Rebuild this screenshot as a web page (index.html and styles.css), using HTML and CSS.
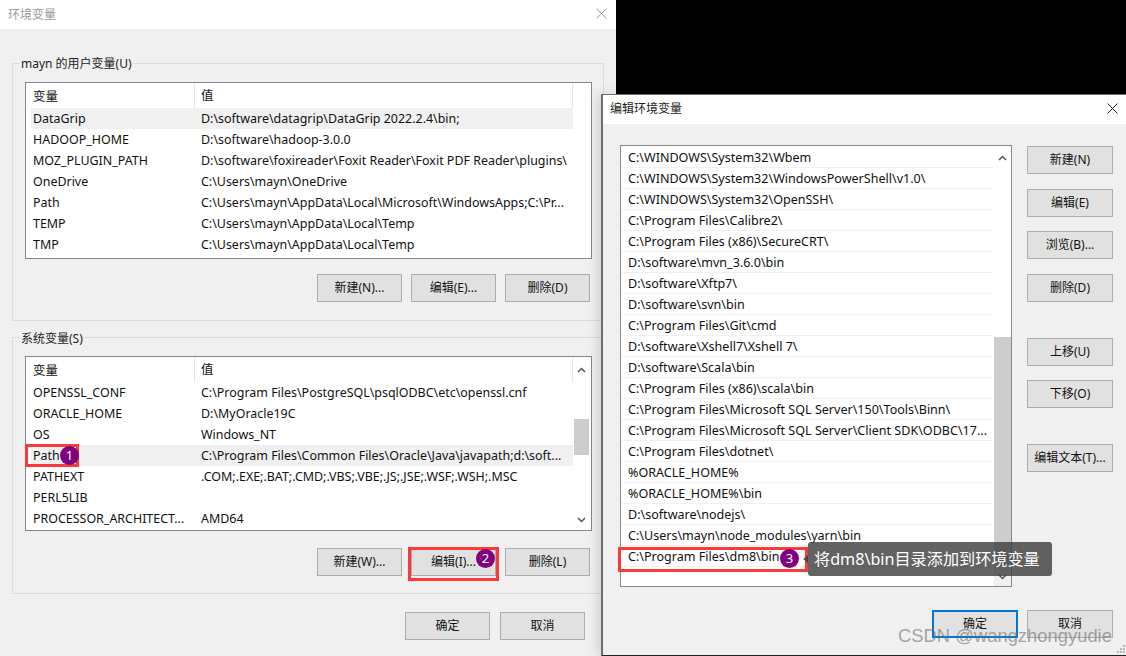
FILE: index.html
```html
<!DOCTYPE html>
<html lang="zh-CN">
<head>
<meta charset="utf-8">
<title>环境变量</title>
<link rel="stylesheet" href="styles.css">
</head>
<body>
<div class="desktop">
  <section class="window win-main">
    <header class="titlebar">
      <span class="title title-muted">环境变量</span>
      <svg class="close close-muted" viewBox="0 0 11 11"><path d="M0.5 0.5L10.5 10.5M10.5 0.5L0.5 10.5"/></svg>
    </header>
    <div class="main-body">
      <fieldset class="group group-user">
        <legend>mayn 的用户变量(U)</legend>
        <div class="list list-user">
          <div class="list-content">
            <div class="head"><span class="c1">变量</span><span class="c2">值</span></div>
            <div class="row selected"><span class="c1">DataGrip</span><span class="c2">D:\software\datagrip\DataGrip 2022.2.4\bin;</span></div>
            <div class="row"><span class="c1">HADOOP_HOME</span><span class="c2">D:\software\hadoop-3.0.0</span></div>
            <div class="row"><span class="c1">MOZ_PLUGIN_PATH</span><span class="c2">D:\software\foxireader\Foxit Reader\Foxit PDF Reader\plugins\</span></div>
            <div class="row"><span class="c1">OneDrive</span><span class="c2">C:\Users\mayn\OneDrive</span></div>
            <div class="row"><span class="c1">Path</span><span class="c2">C:\Users\mayn\AppData\Local\Microsoft\WindowsApps;C:\Pr...</span></div>
            <div class="row"><span class="c1">TEMP</span><span class="c2">C:\Users\mayn\AppData\Local\Temp</span></div>
            <div class="row"><span class="c1">TMP</span><span class="c2">C:\Users\mayn\AppData\Local\Temp</span></div>
          </div>
        </div>
        <div class="btn-row">
          <button class="btn">新建(N)...</button>
          <button class="btn">编辑(E)...</button>
          <button class="btn">删除(D)</button>
        </div>
      </fieldset>
      <fieldset class="group group-system">
        <legend>系统变量(S)</legend>
        <div class="list list-system">
          <div class="list-content">
            <div class="head"><span class="c1">变量</span><span class="c2">值</span></div>
            <div class="row"><span class="c1">OPENSSL_CONF</span><span class="c2">C:\Program Files\PostgreSQL\psqlODBC\etc\openssl.cnf</span></div>
            <div class="row"><span class="c1">ORACLE_HOME</span><span class="c2">D:\MyOracle19C</span></div>
            <div class="row"><span class="c1">OS</span><span class="c2">Windows_NT</span></div>
            <div class="row selected"><span class="c1">Path</span><span class="c2">C:\Program Files\Common Files\Oracle\Java\javapath;d:\soft...</span></div>
            <div class="row"><span class="c1">PATHEXT</span><span class="c2">.COM;.EXE;.BAT;.CMD;.VBS;.VBE;.JS;.JSE;.WSF;.WSH;.MSC</span></div>
            <div class="row"><span class="c1">PERL5LIB</span><span class="c2"></span></div>
            <div class="row"><span class="c1">PROCESSOR_ARCHITECT...</span><span class="c2">AMD64</span></div>
          </div>
          <div class="scrollbar scrollbar-system">
            <svg class="chev" viewBox="0 0 9 6"><path d="M1 5L4.5 1.5L8 5"/></svg>
            <div class="track"><div class="thumb thumb-system"></div></div>
            <svg class="chev" viewBox="0 0 9 6"><path d="M1 1L4.5 4.5L8 1"/></svg>
          </div>
        </div>
        <div class="btn-row">
          <button class="btn">新建(W)...</button>
          <button class="btn">编辑(I)...</button>
          <button class="btn">删除(L)</button>
        </div>
      </fieldset>
      <div class="btn-row dialog-actions">
        <button class="btn">确定</button>
        <button class="btn">取消</button>
      </div>
    </div>
  </section>

  <section class="window win-edit">
    <header class="titlebar">
      <span class="title">编辑环境变量</span>
      <svg class="close" viewBox="0 0 11 11"><path d="M0.5 0.5L10.5 10.5M10.5 0.5L0.5 10.5"/></svg>
    </header>
    <div class="edit-body">
      <div class="path-list">
        <div class="path-rows">
          <div class="path">C:\WINDOWS\System32\Wbem</div>
          <div class="path">C:\WINDOWS\System32\WindowsPowerShell\v1.0\</div>
          <div class="path">C:\WINDOWS\System32\OpenSSH\</div>
          <div class="path">C:\Program Files\Calibre2\</div>
          <div class="path">C:\Program Files (x86)\SecureCRT\</div>
          <div class="path">D:\software\mvn_3.6.0\bin</div>
          <div class="path">D:\software\Xftp7\</div>
          <div class="path">D:\software\svn\bin</div>
          <div class="path">C:\Program Files\Git\cmd</div>
          <div class="path">D:\software\Xshell7\Xshell 7\</div>
          <div class="path">D:\software\Scala\bin</div>
          <div class="path">C:\Program Files (x86)\scala\bin</div>
          <div class="path">C:\Program Files\Microsoft SQL Server\150\Tools\Binn\</div>
          <div class="path">C:\Program Files\Microsoft SQL Server\Client SDK\ODBC\17...</div>
          <div class="path">C:\Program Files\dotnet\</div>
          <div class="path">%ORACLE_HOME%</div>
          <div class="path">%ORACLE_HOME%\bin</div>
          <div class="path">D:\software\nodejs\</div>
          <div class="path">C:\Users\mayn\node_modules\yarn\bin</div>
          <div class="path">C:\Program Files\dm8\bin</div>
        </div>
        <div class="scrollbar scrollbar-edit">
          <svg class="chev" viewBox="0 0 9 6"><path d="M1 5L4.5 1.5L8 5"/></svg>
          <div class="track"><div class="thumb thumb-edit"></div></div>
          <svg class="chev" viewBox="0 0 9 6"><path d="M1 1L4.5 4.5L8 1"/></svg>
        </div>
      </div>
      <div class="side">
        <button class="btn wide">新建(N)</button>
        <button class="btn wide gap-15">编辑(E)</button>
        <button class="btn wide gap-14">浏览(B)...</button>
        <button class="btn wide gap-15">删除(D)</button>
        <button class="btn wide gap-36">上移(U)</button>
        <button class="btn wide gap-14">下移(O)</button>
        <button class="btn wide gap-36">编辑文本(T)...</button>
      </div>
    </div>
    <div class="btn-row edit-actions">
      <button class="btn wide primary">确定</button>
      <button class="btn wide">取消</button>
    </div>
    <svg class="grip" viewBox="0 0 9 9">
      <rect x="6" y="0" width="2" height="2"/>
      <rect x="3" y="3" width="2" height="2"/>
      <rect x="6" y="3" width="2" height="2"/>
      <rect x="0" y="6" width="2" height="2"/>
      <rect x="3" y="6" width="2" height="2"/>
      <rect x="6" y="6" width="2" height="2"/>
    </svg>
  </section>

  <div class="mark mark-path"></div>
  <div class="mark mark-edit"></div>
  <div class="mark mark-dm8"></div>
  <div class="badge badge-1">1</div>
  <div class="badge badge-2">2</div>
  <div class="badge badge-3">3</div>
  <div class="tip">将dm8\bin目录添加到环境变量</div>
  <div class="watermark">CSDN @wangzhongyudie</div>
</div>
</body>
</html>
```
FILE: styles.css
```css
* { box-sizing: border-box; }
html, body { margin: 0; padding: 0; }
body {
  width: 1126px;
  height: 656px;
  overflow: hidden;
  background: #000;
  font-family: "Noto Sans", "Noto Sans CJK SC", sans-serif;
  font-size: 12px;
  color: #111;
}
.desktop { position: relative; width: 1126px; height: 656px; overflow: hidden; }

.window { position: absolute; background: #f0f0f0; }
.win-main { left: 0; top: 0; width: 616px; height: 656px; }
.win-edit {
  left: 601px; top: 94px; width: 525px; height: 562px;
  border-left: 2px solid #6e6e6e;
  border-top: 1px solid #6e6e6e;
  border-bottom: 1px solid #222;
  box-shadow: -4px 0 10px rgba(0, 0, 0, .12);
}

.titlebar {
  display: flex;
  align-items: center;
  justify-content: space-between;
  background: #fff;
  height: 29px;
  padding: 0 9px 2px 8px;
}
.win-edit .titlebar { padding: 0 8px 3px 7px; }
.title { font-size: 12px; color: #222; }
.title-muted { color: #9a9a9a; }
.close { width: 11px; height: 11px; fill: none; stroke: #222; stroke-width: 1; }
.close-muted { stroke: #9a9a9a; }

.main-body { padding: 26px 12px 0 12px; }
.group {
  margin: 0;
  padding: 11px 11px 0 12px;
  border: 1px solid #dcdcdc;
  min-width: 0;
}
.group legend { margin-left: -5px; padding: 0 1px; height: 16px; line-height: 18px; font-size: 12px; color: #222; }
.group-user { height: 266px; }
.group-system { height: 265px; margin-top: 8px; padding-top: 11px; }
.group-system legend { line-height: 20px; }

.list { display: flex; background: #fff; border: 1px solid #828790; width: 567px; font-size: 12.45px; }
.list-user { height: 177px; }
.list-system { height: 175px; }
.list-content { width: 547px; flex: none; }
.head { display: flex; height: 25px; align-items: center; }
.head .c2 { border-left: 1px solid #e5e5e5; height: 25px; line-height: 25px; }
.head .c1 { padding-left: 7px; width: 168px; }
.head .c2 { flex: 1; padding-left: 6px; border-right: 1px solid #e5e5e5; }
.row { display: flex; height: 21px; line-height: 21px; margin-left: 5px; white-space: nowrap; }
.row .c1 { width: 163px; padding-left: 2px; overflow: hidden; }
.row .c2 { flex: 1; padding-left: 7px; }
.selected { background: #f0f0f0; }

.scrollbar { display: flex; flex-direction: column; align-items: center; background: #fff; flex: none; width: 17px; }
.scrollbar-system { padding: 10px 0 7px; }
.scrollbar-edit { padding: 8px 0 6px; margin-left: 1px; background: linear-gradient(#fff 90%, #f0f0f0 90%); }
.chev { width: 9px; height: 6px; fill: none; stroke: #555; stroke-width: 1.5; flex: none; }
.track { flex: 1; width: 100%; }
.scrollbar-system .track { padding-top: 46px; }
.thumb-system { height: 36px; margin: 0 1px; background: #cdcdcd; }
.scrollbar-edit .track { padding-top: 173px; margin: 3px 0; }
.thumb-edit { height: 230px; background: #cdcdcd; }

.btn-row { display: flex; justify-content: flex-end; gap: 9px; padding-right: 2px; margin-top: 15px; width: 567px; }
.group-system .btn-row { margin-top: 17px; }
.btn {
  width: 85px;
  height: 28px;
  padding: 0 0 2px;
  margin: 0;
  background: #e1e1e1;
  border: 1px solid #adadad;
  font: inherit;
  color: #111;
}
.dialog-actions { margin-top: 18px; gap: 10px; width: 573px; padding-right: 0; }
.wide { width: 86px; }

.edit-body { display: flex; padding: 21px 0 0 17px; }
.path-list {
  display: flex;
  width: 392px;
  height: 442px;
  background: #fff;
  border: 1px solid #828790;
  padding: 1px 2px 0 1px;
  font-size: 12.55px;
}
.path-rows { width: 371px; flex: none; }
.path { height: 21px; line-height: 22px; padding-left: 6px; border-bottom: 1px solid #f0f0f0; white-space: nowrap; }
.side { display: flex; flex-direction: column; margin-left: 15px; padding-top: 1px; }
.gap-14 { margin-top: 14px; }
.gap-15 { margin-top: 15px; }
.gap-36 { margin-top: 36px; }
.edit-actions { margin: 23px 0 0; width: 510px; padding-right: 0; }
.primary { border: 2px solid #0078d7; }
.grip { position: absolute; right: 0; bottom: 1px; width: 9px; height: 9px; fill: #b8b8b8; }

.mark { position: absolute; border: 3px solid #f73b3b; }
.mark-path { left: 25px; top: 444px; width: 54px; height: 23px; }
.mark-edit { left: 408px; top: 547px; width: 91px; height: 34px; }
.mark-dm8 { left: 618px; top: 547px; width: 190px; height: 25px; }

.badge {
  position: absolute;
  width: 19px;
  height: 19px;
  border-radius: 50%;
  background: #800080;
  color: #fff;
  font-size: 13px;
  line-height: 19px;
  text-align: center;
}
.badge-1 { left: 60px; top: 446px; }
.badge-2 { left: 476px; top: 549px; }
.badge-3 { left: 780px; top: 549px; }

.tip {
  position: absolute;
  left: 808px;
  top: 542px;
  width: 244px;
  height: 34px;
  line-height: 34px;
  padding-left: 6px;
  border-radius: 3px;
  background: rgba(60, 60, 60, .8);
  color: #fff;
  font-size: 16.15px;
  white-space: nowrap;
}
.tip::before {
  content: "";
  position: absolute;
  left: -5px;
  top: 13px;
  border-style: solid;
  border-width: 4px 5px 4px 0;
  border-color: transparent rgba(60, 60, 60, .8) transparent transparent;
}
.watermark {
  position: absolute;
  left: 898px;
  top: 625px;
  font-family: "Liberation Sans", sans-serif;
  font-size: 18.4px;
  line-height: 22px;
  color: rgba(110, 110, 110, .6);
  white-space: nowrap;
}
```
